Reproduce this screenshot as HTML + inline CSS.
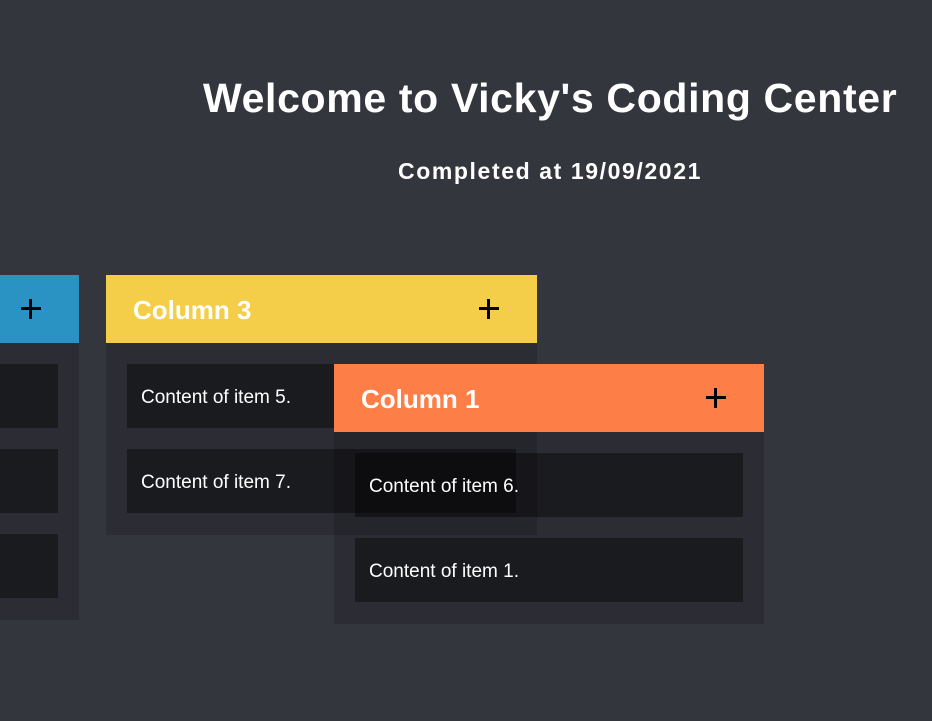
<!DOCTYPE html>
<html><head><meta charset="utf-8"><style>
body{margin:0;width:932px;height:721px;background:#34363e;position:relative;overflow:hidden;font-family:"Liberation Sans",sans-serif;}
h1{position:absolute;left:203px;top:75px;margin:0;font-size:41px;letter-spacing:0.65px;font-weight:bold;color:#fff;white-space:nowrap;}
h2{position:absolute;left:398px;top:158px;margin:0;font-size:23px;letter-spacing:1.6px;font-weight:bold;color:#fff;white-space:nowrap;}
.col{position:absolute;}
.hd{height:68px;position:relative;color:#fff;font-weight:bold;font-size:26px;}
.hd span{position:absolute;left:27px;top:20px;}
.hd b{position:absolute;right:38px;top:24px;width:20px;height:20px;}
.hd b:before{content:"";position:absolute;left:0;top:8px;width:20px;height:3px;background:#000;}
.hd b:after{content:"";position:absolute;left:8px;top:0;width:3px;height:20px;background:#000;}
.bd{background:rgba(0,0,0,0.15);padding:21px 21px 1px;}
.it{height:64px;background:rgba(0,0,0,0.4);margin-bottom:21px;color:#fff;font-size:19px;line-height:68px;padding-left:14px;overflow:hidden;}
</style></head><body>
<h1>Welcome to Vicky's Coding Center</h1>
<h2>Completed at 19/09/2021</h2>
<div class="col" style="left:-352px;top:275px;width:431px">
<div class="hd" style="background:#2a93c4"><b></b></div>
<div class="bd"><div class="it"></div><div class="it"></div><div class="it"></div></div></div>
<div class="col" style="left:106px;top:275px;width:431px">
<div class="hd" style="background:#f4ce48"><span>Column 3</span><b></b></div>
<div class="bd"><div class="it">Content of item 5.</div><div class="it">Content of item 7.</div></div></div>
<div class="col" style="left:334px;top:364px;width:430px">
<div class="hd" style="background:#fd7e46"><span>Column 1</span><b></b></div>
<div class="bd"><div class="it">Content of item 6.</div><div class="it">Content of item 1.</div></div></div>
</body></html>
